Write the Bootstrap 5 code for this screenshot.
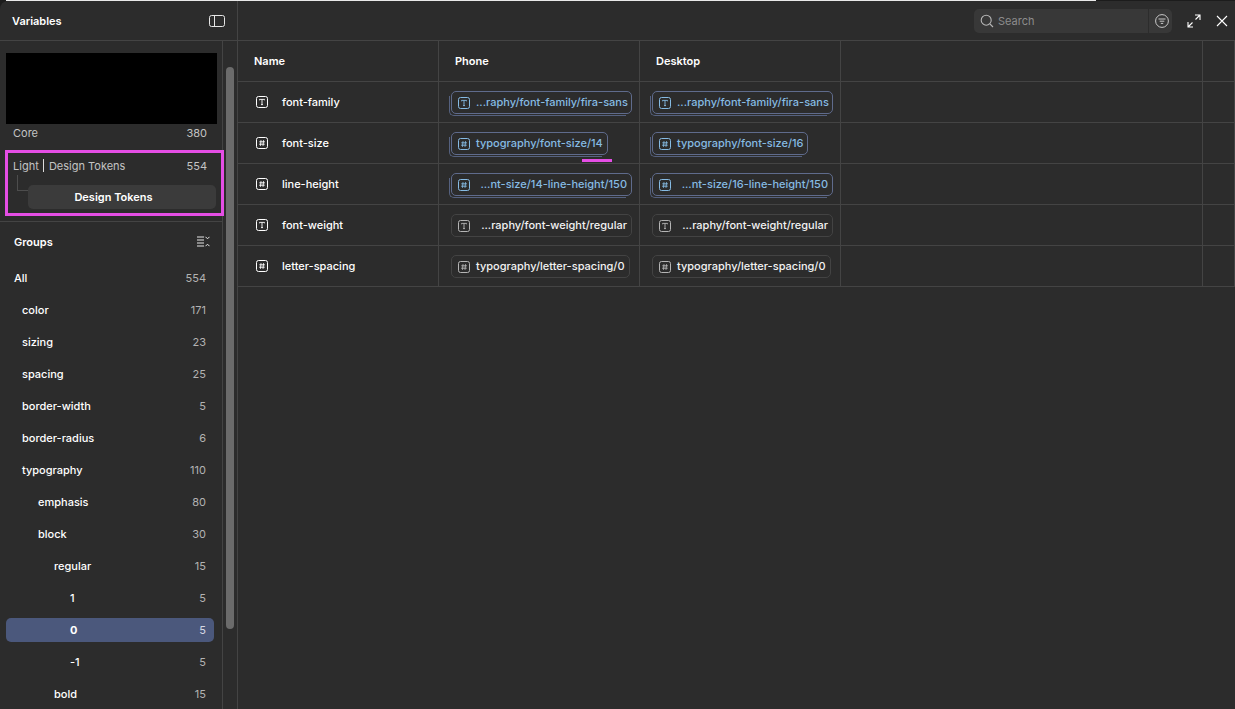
<!DOCTYPE html>
<html>
<head>
    <meta charset="utf-8" />
    <title>Variables</title>
    <link href="https://cdn.jsdelivr.net/npm/bootstrap@5.3.2/dist/css/bootstrap.min.css" rel="stylesheet">
    <style>
        html, body { height: 100%; }
        body { background: #1c1c1c linear-gradient(to right, #1c1c1c 6px, #e9e9e9 6px, #e9e9e9 1096px, #1c1c1c 1096px) no-repeat top left / 100% 1px; color: #fff; font-family: Inter, "Liberation Sans", sans-serif; font-size: 11px; font-weight: 500; overflow: hidden; }
        .app-shell { height: 708px; margin-top: 1px; background: #2c2c2c; border-top-left-radius: 8px; overflow: hidden; }
        .side-col { width: 238px; flex: none; border-right: 1px solid #444; height: 100%; }
        .side-head { height: 40px; border-bottom: 1px solid #444; padding: 0 12px; font-weight: 600; }
        .side-head span, .groups-head span, .search-input span { padding-top: 2px; }
        .side-body { height: 668px; }
        .side-scroll { width: 223px; flex: none; border-right: 1px solid #444; }
        .track { flex: 1; padding: 26px 3px 0 3px; }
        .thumb { width: 8px; height: 562px; background: #6b6b6b; border-radius: 4px; }
        .preview { margin: 12px 5px 0 6px; height: 71px; background: #000; }
        .coll-row { height: 18px; padding: 0 15px 0 13px; color: #c4c4c4; font-weight: 400; }
        .coll-box { position: relative; margin: 8px -2px 0 5px; height: 66px; border: 3px solid #e54ee5; padding-top: 4px; }
        .coll-box .coll-row { padding: 0 14px 0 5px; }
        .sep-bar { display: inline-block; width: 1px; height: 13px; background: #ddd; margin: 0 1.5px; vertical-align: -2px; }
        .mode-line { margin-left: 9px; width: 12px; height: 16px; border-left: 1px solid #4d4d4d; border-bottom: 1px solid #4d4d4d; }
        .mode-btn { width: 188px; height: 24px; background: #3b3b3b; border-radius: 5px; font-weight: 600; margin-left: -1px; margin-top: 10px; padding-right: 17px; }
        .groups-wrap { margin-top: 5px; border-top: 1px solid #444; padding-top: 9px; }
        .groups-head { height: 20px; padding: 0 12px 0 14px; font-weight: 600; }
        .group-list { padding: 15px 8px 0 6px; }
        .group-row { height: 24px; margin-bottom: 8px; padding-right: 8px; padding-top: 1px; border-radius: 5px; }
        .group-row span:last-child { color: #b3b3b3; font-weight: 400; }
        .group-row.is-on { background: #4b587c; font-weight: 700; }
        .group-row.is-on span:last-child { color: #d5d9e4; }
        .lv0 { padding-left: 8px; } .lv1 { padding-left: 16px; } .lv2 { padding-left: 32px; } .lv3 { padding-left: 48px; } .lv4 { padding-left: 64px; }
        .main-col { min-width: 0; }
        .top-bar { height: 40px; border-bottom: 1px solid #444; padding-right: 6px; }
        .search-box { width: 198px; height: 24px; background: #383838; border-radius: 5px; margin-right: 15px; }
        .search-input { width: 175px; height: 24px; padding-left: 6px; color: #8c8c8c; font-weight: 400; gap: 4px; border-right: 1px solid #2c2c2c; }
        .filter-btn { flex: 1; padding-left: 2px; }
        .win-btn { width: 14px; height: 14px; }
        .gap-win { margin-right: 14px; }
        .var-grid { table-layout: fixed; border-collapse: collapse; width: 997px; margin: 0; }
        .var-grid th, .var-grid td { height: 41px; padding: 2px 0 0; border-right: 1px solid #444; border-bottom: 1px solid #444; vertical-align: middle; }
        .var-grid th { height: 40px; font-weight: 600; padding: 0 0 0 16.5px; }
        .var-grid th:first-child { padding-left: 16px; }
        .var-grid td.name-cell { padding-left: 18px; }
        .name-cell .ico { margin-right: 14px; color: #fff; vertical-align: -2px; }
        .col-a { width: 200px; } .col-b { width: 201px; } .col-c { width: 362px; }
        .chip { position: relative; display: inline-flex; align-items: center; height: 23px; margin-left: 12.5px; padding: 0 4px 0 6px; border: 1px solid #434343; border-radius: 5px; gap: 6px; white-space: nowrap; color: #f2f2f2; }
        .chip .ico { color: #b5b5b5; flex-shrink: 0; }
        .chip.bound { border-color: #5f6b8c; color: #86bbe3; }
        .chip.bound::before { content: ""; position: absolute; left: -3px; right: 5px; top: 4px; bottom: -3px; border-left: 1px solid #55617f; border-bottom: 1px solid #55617f; border-bottom-left-radius: 5px; }
        .chip.bound .ico { color: #86bbe3; }
        .chip.wide { width: 181px; justify-content: space-between; }
        .size-mark { position: absolute; left: 130px; bottom: -8px; width: 30px; height: 3px; background: #e54ee5; }
    </style>
</head>
<body>
    <svg width="0" height="0" class="d-none">
        <symbol id="i-t" viewBox="0 0 12 12">
            <rect x=".5" y=".5" width="11" height="11" rx="2" fill="none" stroke="currentColor"/>
            <path d="M3.5 4.3V3.4h5v.9M6 3.4v5.2M5 8.6h2" fill="none" stroke="currentColor" stroke-width=".9"/>
        </symbol>
        <symbol id="i-h" viewBox="0 0 12 12">
            <rect x=".5" y=".5" width="11" height="11" rx="2" fill="none" stroke="currentColor"/>
            <path d="M5 3.2 4.5 8.8M7.5 3.2 7 8.8M3.3 4.8h5.6M3.1 7.2h5.6" fill="none" stroke="currentColor" stroke-width=".9"/>
        </symbol>
    </svg>

    <div class="app-shell d-flex">
        <aside class="side-col">
            <div class="side-head d-flex align-items-center justify-content-between">
                <span>Variables</span>
                <svg width="16" height="12" viewBox="0 0 16 12" fill="none" stroke="#e6e6e6"><rect x=".5" y=".5" width="15" height="11" rx="2"/><path d="M5.5 .5v11"/></svg>
            </div>
            <div class="side-body d-flex">
                <div class="side-scroll">
                    <div class="preview"></div>
                    <div class="coll-row d-flex align-items-center justify-content-between"><span>Core</span><span>380</span></div>
                    <div class="coll-box">
                        <div class="coll-row d-flex align-items-center justify-content-between"><span>Light <i class="sep-bar"></i> Design Tokens</span><span>554</span></div>
                        <div class="d-flex">
                            <div class="mode-line"></div>
                            <div class="mode-btn d-flex align-items-center justify-content-center">Design Tokens</div>
                        </div>
                    </div>
                    <div class="groups-wrap">
                        <div class="groups-head d-flex align-items-center justify-content-between">
                            <span>Groups</span>
                            <svg width="13" height="11" viewBox="0 0 13 11" fill="none" stroke="#e6e6e6"><path d="M0 1h7M0 4h7M0 7h7M0 10h7M8.5 .8l2 2 2-2M8.5 10.2l2-2 2 2"/></svg>
                        </div>
                        <div class="group-list" id="groupList"></div>
                    </div>
                </div>
                <div class="track"><div class="thumb"></div></div>
            </div>
        </aside>

        <main class="main-col flex-grow-1">
            <div class="top-bar d-flex align-items-center justify-content-end">
                <div class="search-box d-flex align-items-center">
                    <div class="search-input d-flex align-items-center">
                        <svg width="14" height="14" viewBox="0 0 14 14" fill="none" stroke="#b5b5b5" stroke-width="1.1"><circle cx="6.2" cy="6.2" r="5"/><path d="m10 10 3 3"/></svg>
                        <span>Search</span>
                    </div>
                    <div class="filter-btn d-flex align-items-center justify-content-center">
                        <svg width="14" height="14" viewBox="0 0 14 14" fill="none" stroke="#c8c8c8"><circle cx="7" cy="7" r="6.4"/><path d="M3.5 5h7M4.7 7.2h4.6M5.8 9.4h2.4"/></svg>
                    </div>
                </div>
                <svg class="win-btn gap-win" viewBox="0 0 14 14" fill="none" stroke="#fff" stroke-width="1.1"><path d="M8 1h5v5M13 1 8.5 5.5M1 8v5h5M1 13l4.5-4.5"/></svg>
                <svg class="win-btn" viewBox="0 0 14 14" fill="none" stroke="#fff" stroke-width="1.1"><path d="m2 2 10 10M12 2 2 12"/></svg>
            </div>
            <table class="var-grid">
                <colgroup><col class="col-a"><col class="col-b"><col class="col-b"><col class="col-c"><col></colgroup>
                <thead><tr><th>Name</th><th>Phone</th><th>Desktop</th><th></th><th></th></tr></thead>
                <tbody id="varRows"></tbody>
            </table>
        </main>
    </div>

    <script src="https://cdn.jsdelivr.net/npm/bootstrap@5.3.2/dist/js/bootstrap.bundle.min.js"></script>
    <script>
        const grupos = [
            ['All', 554, 0], ['color', 171, 1], ['sizing', 23, 1], ['spacing', 25, 1], ['border-width', 5, 1],
            ['border-radius', 6, 1], ['typography', 110, 1], ['emphasis', 80, 2], ['block', 30, 2],
            ['regular', 15, 3], ['1', 5, 4], ['0', 5, 4, true], ['-1', 5, 4], ['bold', 15, 3]
        ];
        document.getElementById('groupList').innerHTML = grupos.map(g => `
            <div class="group-row lv${g[2]} d-flex align-items-center justify-content-between ${g[3] ? 'is-on' : ''}">
                <span>${g[0]}</span><span>${g[1]}</span>
            </div>`).join('');

        const filas = [
            ['font-family', 't', '...raphy/font-family/fira-sans', '...raphy/font-family/fira-sans', true, true],
            ['font-size', 'h', 'typography/font-size/14', 'typography/font-size/16', true, false],
            ['line-height', 'h', '...nt-size/14-line-height/150', '...nt-size/16-line-height/150', true, true],
            ['font-weight', 't', '...raphy/font-weight/regular', '...raphy/font-weight/regular', false, true],
            ['letter-spacing', 'h', 'typography/letter-spacing/0', 'typography/letter-spacing/0', false, false]
        ];
        const ico = n => `<svg class="ico" width="12" height="12"><use href="#i-${n}"/></svg>`;
        const chip = (n, txt, bound, wide, mark) => `<span class="chip ${bound ? 'bound' : ''} ${wide ? 'wide' : ''}">${ico(n)}<span>${txt}</span>${mark ? '<i class="size-mark"></i>' : ''}</span>`;
        document.getElementById('varRows').innerHTML = filas.map((f, i) => `
            <tr>
                <td class="name-cell">${ico(f[1])}<span>${f[0]}</span></td>
                <td>${chip(f[1], f[2], f[4], f[5], i === 1)}</td>
                <td>${chip(f[1], f[3], f[4], f[5], false)}</td>
                <td></td><td></td>
            </tr>`).join('');
    </script>
</body>
</html>
